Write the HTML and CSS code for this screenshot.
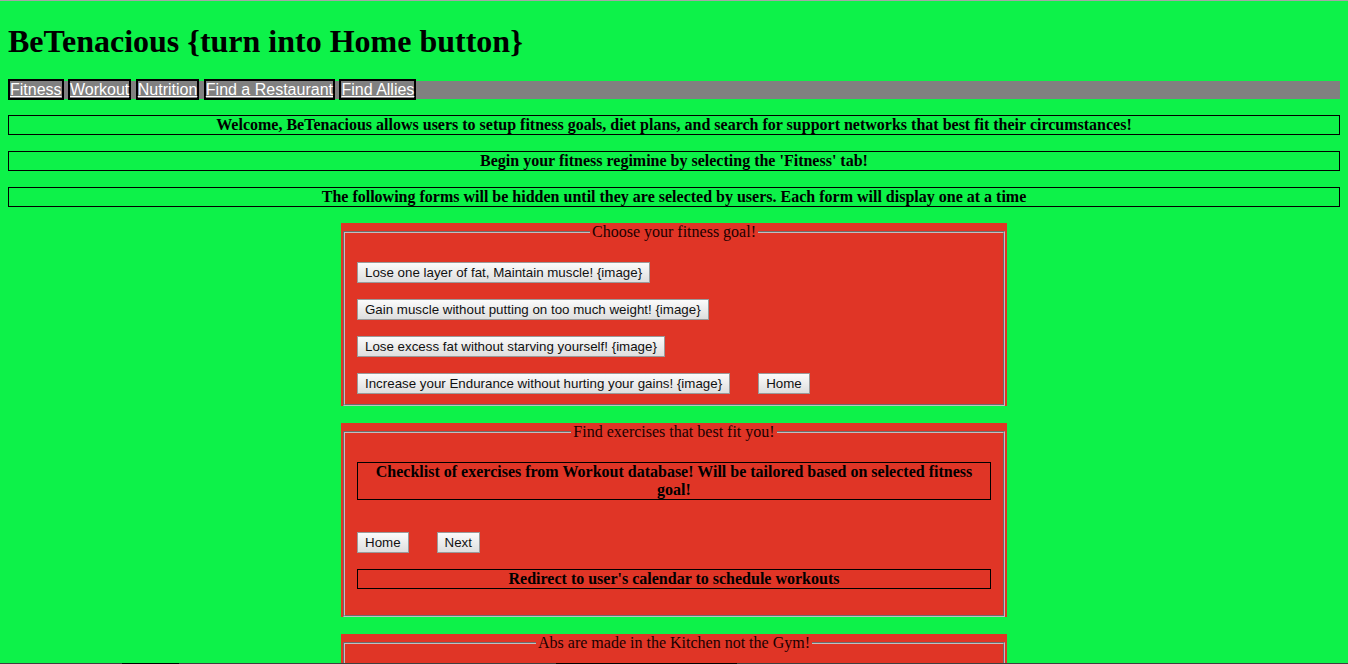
FILE: index.html
```html
<!DOCTYPE html>
<html lang="en">
<head>
<meta charset="utf-8">
<title>BeTenacious</title>
<link rel="stylesheet" href="styles.css">
</head>
<body>
<h1 class="title">BeTenacious {turn into Home button}</h1>
<nav class="nav"><a href="#" class="nav-link">Fitness</a> <a href="#" class="nav-link">Workout</a> <a href="#" class="nav-link">Nutrition</a> <a href="#" class="nav-link">Find a Restaurant</a> <a href="#" class="nav-link">Find Allies</a></nav>
<p class="banner">Welcome, BeTenacious allows users to setup fitness goals, diet plans, and search for support networks that best fit their circumstances!</p>
<p class="banner">Begin your fitness regimine by selecting the 'Fitness' tab!</p>
<p class="banner">The following forms will be hidden until they are selected by users. Each form will display one at a time</p>

<form class="panel">
  <fieldset class="group">
    <legend class="group-title">Choose your fitness goal!</legend>
    <div class="goal-list">
      <div class="row"><button type="button" class="btn">Lose one layer of fat, Maintain muscle! {image}</button></div>
      <div class="row"><button type="button" class="btn">Gain muscle without putting on too much weight! {image}</button></div>
      <div class="row"><button type="button" class="btn">Lose excess fat without starving yourself! {image}</button></div>
      <div class="row"><button type="button" class="btn">Increase your Endurance without hurting your gains! {image}</button><button type="button" class="btn">Home</button></div>
    </div>
  </fieldset>
</form>

<form class="panel">
  <fieldset class="group">
    <legend class="group-title">Find exercises that best fit you!</legend>
    <p class="box">Checklist of exercises from Workout database! Will be tailored based on selected fitness goal!</p>
    <div class="row row-spaced"><button type="button" class="btn">Home</button><button type="button" class="btn">Next</button></div>
    <p class="box">Redirect to user's calendar to schedule workouts</p>
  </fieldset>
</form>

<form class="panel">
  <fieldset class="group">
    <legend class="group-title">Abs are made in the Kitchen not the Gym!</legend>
    <p class="box">Meal plans from Nutrition database! Will be tailored based on selected fitness goal!</p>
    <div class="row row-spaced"><button type="button" class="btn">Home</button><button type="button" class="btn">Next</button></div>
  </fieldset>
</form>

<div class="bottom-edge"><span class="edge-seg seg-a"></span><span class="edge-seg seg-b"></span></div>
</body>
</html>
```
FILE: styles.css
```css
html {
  border-top: 1px solid #a6a6a6;
  background: #0df249;
}
body {
  margin: 8px;
  font-family: "Liberation Serif", "Times New Roman", serif;
  font-size: 16px;
  color: #000;
  background: #0df249;
}
.title {
  font-size: 32px;
  font-weight: bold;
  margin: 14px 0 21px;
}
.nav {
  background: #808080;
  font-family: "Liberation Sans", Arial, sans-serif;
  font-size: 16px;
}
.nav-link {
  color: #fff;
  text-decoration: underline;
  border: 2px solid #000;
}
.banner {
  margin: 16px 0;
  border: 1px solid #000;
  text-align: center;
  font-weight: bold;
  font-size: 16px;
  line-height: 18px;
}
.panel {
  width: 666px;
  margin: 16px auto 17px;
  background: #e03526;
}
.group {
  margin: 0 2px;
  padding: 5.6px 12px 10px;
  border: 2px groove #c0c0c0;
}
.group-title {
  margin: 0 auto;
  padding: 0 2px;
  color: #1a0000;
}
.goal-list {
  display: flex;
  flex-direction: column;
  gap: 16px;
  padding-top: 15px;
}
.row {
  display: flex;
  align-items: center;
  gap: 28px;
}
.row-spaced {
  margin-top: 32px;
}
.btn {
  font-family: "Liberation Sans", Arial, sans-serif;
  font-size: 13.33px;
  color: #111;
  height: 21px;
  padding: 1px 7px;
  border: 1px solid #9a9a9a;
  border-radius: 0;
  background: linear-gradient(#fbfbfb, #dedede);
}
.box {
  margin: 16px 0;
  border: 1px solid #000;
  text-align: center;
  font-weight: bold;
  font-size: 16px;
  line-height: 18px;
}
.bottom-edge {
  position: fixed;
  left: 0;
  right: 0;
  bottom: 0;
  height: 1px;
  background: #3f3f3f;
}
.edge-seg {
  position: absolute;
  top: 0;
  height: 1px;
  background: #000;
}
.seg-a { left: 122px; width: 57px; }
.seg-b { left: 556px; width: 181px; }
```
